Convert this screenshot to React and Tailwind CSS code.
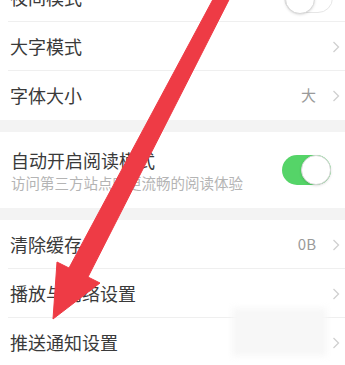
import React from "react";

const font = { fontFamily: '"Noto Sans CJK SC", "Noto Sans", sans-serif' };

function Chevron() {
  return (
    <svg width="8" height="12" viewBox="0 0 8 12" className="shrink-0">
      <path d="M1.5 1 L6.5 6 L1.5 11" fill="none" stroke="#d0d0d0" strokeWidth="1.3" />
    </svg>
  );
}

function Toggle({ on }) {
  return (
    <div
      className={`w-[49px] h-[30px] rounded-full relative shrink-0 ${
        on ? "bg-[#55d468]" : "bg-white border border-[#e6e6e6]"
      }`}
    >
      <div
        className={`absolute top-0 w-[30px] h-[30px] rounded-full bg-white border border-[#d8d8d8] shadow-sm ${
          on ? "right-0" : "left-0"
        }`}
      />
    </div>
  );
}

function Row({ label, value, toggle, last }) {
  return (
    <div className="h-[49px] flex items-center pl-[10px] relative bg-white">
      <span className="flex-1 text-[18px] text-[#3a3a3a]">{label}</span>
      {toggle !== undefined ? (
        <div className="pr-[12px]">
          <Toggle on={toggle} />
        </div>
      ) : (
        <div className="flex items-center pr-[5px]">
          {value && <span className="text-[15px] text-[#9a9a9a] mr-[16px]">{value}</span>}
          <Chevron />
        </div>
      )}
      {!last && <div className="absolute left-[8px] right-0 bottom-0 h-px bg-[#efefef]" />}
    </div>
  );
}

export default function App() {
  return (
    <div className="w-[345px] h-[365px] overflow-hidden bg-[#f3f3f3] relative" style={font}>
      <div className="-mt-[27px]">
        <Row label="夜间模式" toggle={false} />
        <Row label="大字模式" />
        <Row label="字体大小" value="大" last />

        <div className="h-[12px]" />

        <div className="h-[76px] bg-white flex items-center pl-[11px] pr-[14px]">
          <div className="flex-1 flex flex-col">
            <span className="text-[18px] leading-[26px] text-[#3a3a3a]">自动开启阅读模式</span>
            <span className="text-[14.5px] leading-[20px] text-[#b4b4b4]">
              访问第三方站点时更流畅的阅读体验
            </span>
          </div>
          <Toggle on />
        </div>

        <div className="h-[12px]" />

        <Row label="清除缓存" value="0B" />
        <Row label="播放与网络设置" />
        <Row label="推送通知设置" last />
      </div>

      {/* blurred watermark patch */}
      <div className="absolute left-[232px] top-[308px] w-[95px] h-[48px] bg-[#f7f7f7] blur-[3px]" />

      {/* red arrow */}
      <svg className="absolute inset-0" width="345" height="365" viewBox="0 0 345 365">
        <polygon
          points="218,-10 234,-10 88,277 100,283 53,319 57,262 69,268"
          fill="#ee3b45"
          stroke="#ee3b45"
          strokeWidth="1"
          strokeLinejoin="round"
        />
      </svg>
    </div>
  );
}
